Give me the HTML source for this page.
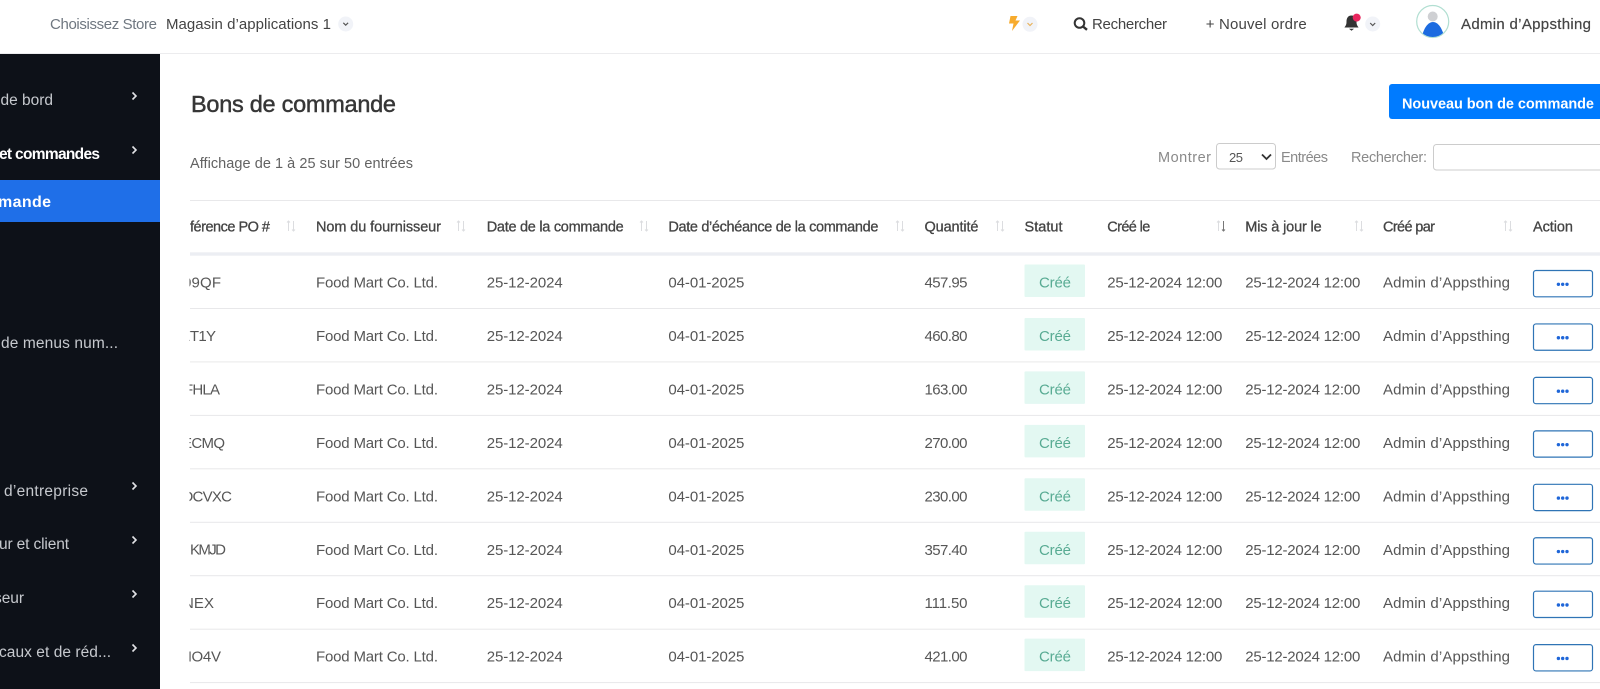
<!DOCTYPE html>
<html lang="fr">
<head>
<meta charset="utf-8">
<title>Bons de commande</title>
<style>
html,body{margin:0;padding:0;background:#fff;width:1600px;height:689px;overflow:hidden}
svg{display:block}
text{font-family:"Liberation Sans",sans-serif;font-size:15px;fill:#565656}
.nav{fill:#c6c9ce;font-size:15.5px}
.navb{fill:#fff;font-size:15.5px;font-weight:700}
.top{fill:#444;font-size:15px}
.th{fill:#444;stroke:#444;stroke-width:.3px;font-size:14.5px}
.mut{fill:#8a8a8a;font-size:14.5px}
.bd{fill:#58ab93}
.ar{fill:none;stroke:#dcdde0;stroke-width:1}
.line{fill:#e8e8ea}
.bb{fill:#e3f8f2}
.ab{fill:#fff;stroke:#2f74b5;stroke-width:1.2}
.dot{fill:#1f66d8}
.bub{fill:#f1f3f8}
.chv{fill:none;stroke:#555;stroke-width:1.2}
</style>
</head>
<body>
<svg xmlns="http://www.w3.org/2000/svg" width="1600" height="689" viewBox="0 0 1600 689">
<defs>
<clipPath id="c"><rect x="189.5" y="200" width="1411" height="489"/></clipPath>
<clipPath id="av"><circle cx="1432.7" cy="21.5" r="15.5"/></clipPath>
</defs>

<!-- top bar -->
<rect x="0" y="53" width="1600" height="1" fill="#ececee"/>
<text x="50" y="29" textLength="107" style="fill:#6f7780">Choisissez Store</text>
<text class="top" x="166" y="29" textLength="165">Magasin d’applications 1</text>
<circle class="bub" cx="345.7" cy="24" r="7.5"/>
<path class="chv" d="M343.3 22.8l2.4 2.4 2.4-2.4"/>

<path d="M1010.5 16h7l-2 4.500h4.500l-8 10.500 1.500-7.500h-4.500z" fill="#f7ab2d"/>
<circle class="bub" cx="1030" cy="24.3" r="7.5"/>
<path class="chv" style="stroke:#e8b25c" d="M1027.5 23l2.5 2.5 2.5-2.5"/>
<circle cx="1079.5" cy="23" r="4.8" fill="none" stroke="#333" stroke-width="2"/>
<path d="M1083 26.5l4 3.300" stroke="#333" stroke-width="2.400" fill="none"/>
<text class="top" x="1092" y="29" textLength="75">Rechercher</text>
<text class="top" x="1205.7" y="29" textLength="101">+ Nouvel ordre</text>
<path d="M1351.5 15.500c-3.800 0-5 3-5 6.500s-1.500 4.200-2 5.500h14c-.5-1.300-2-2-2-5.500s-1.200-6.500-5-6.500z" fill="#333"/>
<path d="M1349 28.800h5l-2.500 2z" fill="#333"/>
<circle cx="1356.7" cy="17.6" r="4" fill="#e8265e"/>
<circle class="bub" cx="1372.7" cy="24" r="7.5"/>
<path class="chv" d="M1370.2 23l2.5 2.5 2.5-2.5"/>
<circle cx="1432.7" cy="21.5" r="16" fill="#fff" stroke="#b2dfd2" stroke-width="1.2"/>
<g clip-path="url(#av)">
<circle cx="1432.7" cy="16.5" r="5" fill="#cfd0d3"/>
<path d="M1422 36c2-8 6-14 11-14s9 6 11 14v4h-22z" fill="#1c6be0"/>
</g>
<text class="top" x="1461" y="29" textLength="130" style="stroke:#444;stroke-width:.2px">Admin d’Appsthing</text>

<!-- sidebar -->
<rect x="0" y="54" width="160" height="635" fill="#0d1118"/>
<rect x="0" y="180" width="160" height="42" fill="#1f6fe8"/>
<text class="nav" x=".5" y="105" textLength="52.5">de bord</text>
<text class="navb" x="-1" y="159" textLength="101">et commandes</text>
<text class="navb" x="-2" y="207" textLength="53" style="font-size:16px">mande</text>
<text class="nav" x="1" y="348" textLength="117">de menus num...</text>
<text class="nav" x="4" y="496" textLength="84">d’entreprise</text>
<text class="nav" x="-1" y="549" textLength="70">ur et client</text>
<text class="nav" x="-6" y="603" textLength="30">seur</text>
<text class="nav" x="-1" y="657" textLength="112">caux et de réd...</text>
<g fill="none" stroke="#e2e3e6" stroke-width="1.6">
<path d="M132.5 92.5l3.500 3.500-3.500 3.500"/>
<path d="M132.5 146.500l3.500 3.500-3.500 3.500"/>
<path d="M132.5 482.500l3.500 3.500-3.500 3.500"/>
<path d="M132.5 536.500l3.500 3.500-3.500 3.500"/>
<path d="M132.5 590.500l3.500 3.500-3.500 3.500"/>
<path d="M132.5 644.500l3.500 3.500-3.500 3.500"/>
</g>

<!-- page heading -->
<text x="191" y="112" textLength="205" style="font-size:23.500px;fill:#363636;stroke:#363636;stroke-width:.45px">Bons de commande</text>
<rect x="1389" y="84" width="215" height="35" rx="3" fill="#007bff"/>
<text x="1402" y="108.500" textLength="192" style="fill:#fff;font-weight:700;font-size:14.5px">Nouveau bon de commande</text>
<text x="190" y="168" textLength="223" style="font-size:14.500px;fill:#626262">Affichage de 1 à 25 sur 50 entrées</text>

<text class="mut" x="1158" y="162" textLength="53">Montrer</text>
<rect x="1216.5" y="143.5" width="59" height="25.500" rx="3" fill="#fff" stroke="#ccc"/>
<text x="1229" y="162" textLength="14" style="font-size:13px;fill:#555">25</text>
<path d="M1262 154.5l4.500 4.500 4.500-4.500" fill="none" stroke="#333" stroke-width="1.8"/>
<text class="mut" x="1281" y="162" textLength="47">Entrées</text>
<text class="mut" x="1351" y="162" textLength="76">Rechercher:</text>
<rect x="1433.5" y="144.5" width="180" height="25.500" rx="3" fill="#fff" stroke="#ccc"/>

<!-- table -->
<rect x="190" y="200" width="1410" height="1" class="line"/>
<rect x="190" y="252.3" width="1410" height="3.400" fill="#eceef3"/>
<g>
<rect class="line" x="190" y="308" width="1410" height="1"/>
<rect class="line" x="190" y="361.4" width="1410" height="1"/>
<rect class="line" x="190" y="414.9" width="1410" height="1"/>
<rect class="line" x="190" y="468.3" width="1410" height="1"/>
<rect class="line" x="190" y="521.8" width="1410" height="1"/>
<rect class="line" x="190" y="575.2" width="1410" height="1"/>
<rect class="line" x="190" y="628.7" width="1410" height="1"/>
<rect class="line" x="190" y="682.1" width="1410" height="1"/>
</g>

<text class="th" x="190" y="231.5" textLength="80">férence PO #</text>
<text class="th" x="316" y="231.5" textLength="125">Nom du fournisseur</text>
<text class="th" x="486.7" y="231.5" textLength="137">Date de la commande</text>
<text class="th" x="668.4" y="231.5" textLength="210">Date d’échéance de la commande</text>
<text class="th" x="924.5" y="231.5" textLength="54">Quantité</text>
<text class="th" x="1024.5" y="231.5" textLength="38">Statut</text>
<text class="th" x="1107.3" y="231.5" textLength="43">Créé le</text>
<text class="th" x="1245.3" y="231.5" textLength="76.4">Mis à jour le</text>
<text class="th" x="1383" y="231.5" textLength="52">Créé par</text>
<text class="th" x="1533" y="231.5" textLength="40">Action</text>

<g class="ar">
<path d="M288.5 231v-10M287 222.500l1.500-1.500 1.500 1.500M293.5 221v10M292 229.500l1.500 1.500 1.500-1.500"/>
<path d="M458.5 231v-10M457 222.500l1.500-1.500 1.500 1.500M463.5 221v10M462 229.500l1.500 1.500 1.500-1.500"/>
<path d="M641.5 231v-10M640 222.500l1.500-1.500 1.500 1.500M646.5 221v10M645 229.500l1.500 1.500 1.500-1.500"/>
<path d="M897.5 231v-10M896 222.500l1.500-1.500 1.500 1.500M902.5 221v10M901 229.500l1.500 1.500 1.500-1.500"/>
<path d="M997.5 231v-10M996 222.500l1.500-1.500 1.500 1.500M1002.5 221v10M1001 229.500l1.500 1.500 1.500-1.500"/>
<path d="M1218.5 231v-10M1217 222.500l1.500-1.500 1.500 1.500"/>
<path d="M1356.5 231v-10M1355 222.500l1.500-1.500 1.500 1.500M1361.5 221v10M1360 229.500l1.500 1.500 1.500-1.500"/>
<path d="M1505.5 231v-10M1504 222.500l1.500-1.500 1.500 1.500M1510.5 221v10M1509 229.500l1.500 1.500 1.500-1.500"/>
</g>
<path d="M1223.5 221v10M1222 229.500l1.500 1.500 1.500-1.500" fill="none" stroke="#777"/>

<g clip-path="url(#c)">
<text x="183" y="287.5" textLength="38">09QF</text>
<text x="180.5" y="340.9" textLength="35.5">ET1Y</text>
<text x="184" y="394.4" textLength="36">FHLA</text>
<text x="182" y="447.8" textLength="43">ECMQ</text>
<text x="181.6" y="501.3" textLength="50.4">OCVXC</text>
<text x="190" y="554.7" textLength="36">KMJD</text>
<text x="183" y="608.2" textLength="31">NEX</text>
<text x="181" y="661.6" textLength="40">HO4V</text>
</g>

<g>
<text x="316" y="287.5" textLength="122">Food Mart Co. Ltd.</text>
<text x="486.7" y="287.5" textLength="76">25-12-2024</text>
<text x="668.4" y="287.5" textLength="76">04-01-2025</text>
<text x="924.5" y="287.5" textLength="43">457.95</text>
<rect class="bb" x="1024.5" y="264.5" width="60.5" height="32.5" rx="1"/>
<text class="bd" x="1039" y="287.5" textLength="32">Créé</text>
<text x="1107.3" y="287.5" textLength="115">25-12-2024 12:00</text>
<text x="1245.3" y="287.5" textLength="115">25-12-2024 12:00</text>
<text x="1383" y="287.5" textLength="127">Admin d’Appsthing</text>
<rect class="ab" x="1533.5" y="270.5" width="59" height="26.3" rx="2.5"/>
<circle class="dot" cx="1558.4" cy="284.3" r="1.7"/><circle class="dot" cx="1562.7" cy="284.3" r="1.7"/><circle class="dot" cx="1567" cy="284.3" r="1.7"/>
</g>

<g transform="translate(0 53.45)">
<text x="316" y="287.5" textLength="122">Food Mart Co. Ltd.</text>
<text x="486.7" y="287.5" textLength="76">25-12-2024</text>
<text x="668.4" y="287.5" textLength="76">04-01-2025</text>
<text x="924.5" y="287.5" textLength="43">460.80</text>
<rect class="bb" x="1024.5" y="264.5" width="60.5" height="32.5" rx="1"/>
<text class="bd" x="1039" y="287.5" textLength="32">Créé</text>
<text x="1107.3" y="287.5" textLength="115">25-12-2024 12:00</text>
<text x="1245.3" y="287.5" textLength="115">25-12-2024 12:00</text>
<text x="1383" y="287.5" textLength="127">Admin d’Appsthing</text>
<rect class="ab" x="1533.5" y="270.5" width="59" height="26.3" rx="2.5"/>
<circle class="dot" cx="1558.4" cy="284.3" r="1.7"/><circle class="dot" cx="1562.7" cy="284.3" r="1.7"/><circle class="dot" cx="1567" cy="284.3" r="1.7"/>
</g>

<g transform="translate(0 106.9)">
<text x="316" y="287.5" textLength="122">Food Mart Co. Ltd.</text>
<text x="486.7" y="287.5" textLength="76">25-12-2024</text>
<text x="668.4" y="287.5" textLength="76">04-01-2025</text>
<text x="924.5" y="287.5" textLength="43">163.00</text>
<rect class="bb" x="1024.5" y="264.5" width="60.5" height="32.5" rx="1"/>
<text class="bd" x="1039" y="287.5" textLength="32">Créé</text>
<text x="1107.3" y="287.5" textLength="115">25-12-2024 12:00</text>
<text x="1245.3" y="287.5" textLength="115">25-12-2024 12:00</text>
<text x="1383" y="287.5" textLength="127">Admin d’Appsthing</text>
<rect class="ab" x="1533.5" y="270.5" width="59" height="26.3" rx="2.5"/>
<circle class="dot" cx="1558.4" cy="284.3" r="1.7"/><circle class="dot" cx="1562.7" cy="284.3" r="1.7"/><circle class="dot" cx="1567" cy="284.3" r="1.7"/>
</g>

<g transform="translate(0 160.35)">
<text x="316" y="287.5" textLength="122">Food Mart Co. Ltd.</text>
<text x="486.7" y="287.5" textLength="76">25-12-2024</text>
<text x="668.4" y="287.5" textLength="76">04-01-2025</text>
<text x="924.5" y="287.5" textLength="43">270.00</text>
<rect class="bb" x="1024.5" y="264.5" width="60.5" height="32.5" rx="1"/>
<text class="bd" x="1039" y="287.5" textLength="32">Créé</text>
<text x="1107.3" y="287.5" textLength="115">25-12-2024 12:00</text>
<text x="1245.3" y="287.5" textLength="115">25-12-2024 12:00</text>
<text x="1383" y="287.5" textLength="127">Admin d’Appsthing</text>
<rect class="ab" x="1533.5" y="270.5" width="59" height="26.3" rx="2.5"/>
<circle class="dot" cx="1558.4" cy="284.3" r="1.7"/><circle class="dot" cx="1562.7" cy="284.3" r="1.7"/><circle class="dot" cx="1567" cy="284.3" r="1.7"/>
</g>

<g transform="translate(0 213.8)">
<text x="316" y="287.5" textLength="122">Food Mart Co. Ltd.</text>
<text x="486.7" y="287.5" textLength="76">25-12-2024</text>
<text x="668.4" y="287.5" textLength="76">04-01-2025</text>
<text x="924.5" y="287.5" textLength="43">230.00</text>
<rect class="bb" x="1024.5" y="264.5" width="60.5" height="32.5" rx="1"/>
<text class="bd" x="1039" y="287.5" textLength="32">Créé</text>
<text x="1107.3" y="287.5" textLength="115">25-12-2024 12:00</text>
<text x="1245.3" y="287.5" textLength="115">25-12-2024 12:00</text>
<text x="1383" y="287.5" textLength="127">Admin d’Appsthing</text>
<rect class="ab" x="1533.5" y="270.5" width="59" height="26.3" rx="2.5"/>
<circle class="dot" cx="1558.4" cy="284.3" r="1.7"/><circle class="dot" cx="1562.7" cy="284.3" r="1.7"/><circle class="dot" cx="1567" cy="284.3" r="1.7"/>
</g>

<g transform="translate(0 267.25)">
<text x="316" y="287.5" textLength="122">Food Mart Co. Ltd.</text>
<text x="486.7" y="287.5" textLength="76">25-12-2024</text>
<text x="668.4" y="287.5" textLength="76">04-01-2025</text>
<text x="924.5" y="287.5" textLength="43">357.40</text>
<rect class="bb" x="1024.5" y="264.5" width="60.5" height="32.5" rx="1"/>
<text class="bd" x="1039" y="287.5" textLength="32">Créé</text>
<text x="1107.3" y="287.5" textLength="115">25-12-2024 12:00</text>
<text x="1245.3" y="287.5" textLength="115">25-12-2024 12:00</text>
<text x="1383" y="287.5" textLength="127">Admin d’Appsthing</text>
<rect class="ab" x="1533.5" y="270.5" width="59" height="26.3" rx="2.5"/>
<circle class="dot" cx="1558.4" cy="284.3" r="1.7"/><circle class="dot" cx="1562.7" cy="284.3" r="1.7"/><circle class="dot" cx="1567" cy="284.3" r="1.7"/>
</g>

<g transform="translate(0 320.7)">
<text x="316" y="287.5" textLength="122">Food Mart Co. Ltd.</text>
<text x="486.7" y="287.5" textLength="76">25-12-2024</text>
<text x="668.4" y="287.5" textLength="76">04-01-2025</text>
<text x="924.5" y="287.5" textLength="43">111.50</text>
<rect class="bb" x="1024.5" y="264.5" width="60.5" height="32.5" rx="1"/>
<text class="bd" x="1039" y="287.5" textLength="32">Créé</text>
<text x="1107.3" y="287.5" textLength="115">25-12-2024 12:00</text>
<text x="1245.3" y="287.5" textLength="115">25-12-2024 12:00</text>
<text x="1383" y="287.5" textLength="127">Admin d’Appsthing</text>
<rect class="ab" x="1533.5" y="270.5" width="59" height="26.3" rx="2.5"/>
<circle class="dot" cx="1558.4" cy="284.3" r="1.7"/><circle class="dot" cx="1562.7" cy="284.3" r="1.7"/><circle class="dot" cx="1567" cy="284.3" r="1.7"/>
</g>

<g transform="translate(0 374.15)">
<text x="316" y="287.5" textLength="122">Food Mart Co. Ltd.</text>
<text x="486.7" y="287.5" textLength="76">25-12-2024</text>
<text x="668.4" y="287.5" textLength="76">04-01-2025</text>
<text x="924.5" y="287.5" textLength="43">421.00</text>
<rect class="bb" x="1024.5" y="264.5" width="60.5" height="32.5" rx="1"/>
<text class="bd" x="1039" y="287.5" textLength="32">Créé</text>
<text x="1107.3" y="287.5" textLength="115">25-12-2024 12:00</text>
<text x="1245.3" y="287.5" textLength="115">25-12-2024 12:00</text>
<text x="1383" y="287.5" textLength="127">Admin d’Appsthing</text>
<rect class="ab" x="1533.5" y="270.5" width="59" height="26.3" rx="2.5"/>
<circle class="dot" cx="1558.4" cy="284.3" r="1.7"/><circle class="dot" cx="1562.7" cy="284.3" r="1.7"/><circle class="dot" cx="1567" cy="284.3" r="1.7"/>
</g>
</svg>
</body>
</html>
